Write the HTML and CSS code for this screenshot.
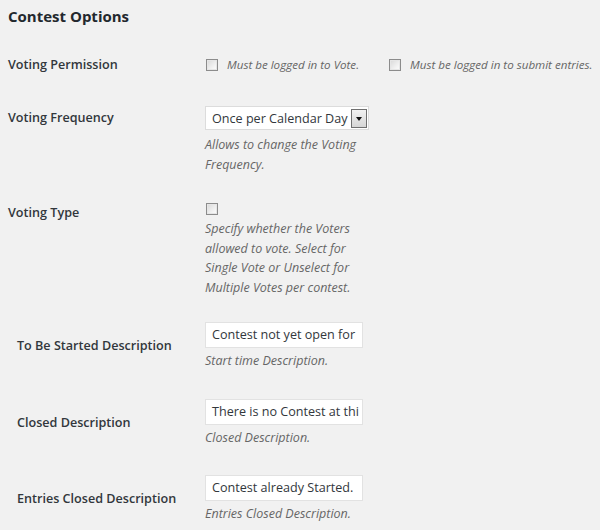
FILE: index.html
```html
<!DOCTYPE html>
<html>
<head>
<meta charset="utf-8">
<link rel="stylesheet" href="styles.css">
</head>
<body>
<div class="page">
  <h3 class="title">Contest Options</h3>

  <div class="row row-perm">
    <div class="label">Voting Permission</div>
    <div class="field inline">
      <label class="check"><span class="cb"></span><span class="desc chk">Must be logged in to Vote.</span></label>
      <label class="check second"><span class="cb"></span><span class="desc chk">Must be logged in to submit entries.</span></label>
    </div>
  </div>

  <div class="row row-freq">
    <div class="label">Voting Frequency</div>
    <div class="field">
      <div class="select"><span class="select-text">Once per Calendar Day</span><span class="select-btn"><span class="tri"></span></span></div>
      <p class="desc block">Allows to change the Voting<br>Frequency.</p>
    </div>
  </div>

  <div class="row row-type">
    <div class="label">Voting Type</div>
    <div class="field">
      <span class="cb solo"></span>
      <p class="desc block type-desc">Specify whether the Voters<br>allowed to vote. Select for<br>Single Vote or Unselect for<br>Multiple Votes per contest.</p>
    </div>
  </div>

  <div class="row row-text first-text">
    <div class="label indent">To Be Started Description</div>
    <div class="field">
      <div class="input">Contest not yet open for</div>
      <p class="desc block small-gap">Start time Description.</p>
    </div>
  </div>

  <div class="row row-text">
    <div class="label indent">Closed Description</div>
    <div class="field">
      <div class="input">There is no Contest at thi</div>
      <p class="desc block small-gap">Closed Description.</p>
    </div>
  </div>

  <div class="row row-text">
    <div class="label indent">Entries Closed Description</div>
    <div class="field">
      <div class="input">Contest already Started.</div>
      <p class="desc block small-gap">Entries Closed Description.</p>
    </div>
  </div>
</div>
</body>
</html>
```

FILE: styles.css
```css
html, body {
  margin: 0;
  padding: 0;
  background: #f1f1f1;
}
body {
  font-family: "Open Sans", "Liberation Sans", sans-serif;
  font-size: 13px;
  color: #23282d;
}
.page {
  padding: 6px 8px 0 8px;
}
.title {
  margin: 0;
  font-size: 15px;
  line-height: 20px;
  font-weight: 700;
  color: #23282d;
}
.row {
  display: flex;
  align-items: flex-start;
}
.label {
  width: 197px;
  flex: none;
  font-weight: 600;
  font-size: 12.6px;
  line-height: 20px;
  color: #32373c;
}
.label.indent {
  padding-left: 9px;
  width: 188px;
}
.field {
  display: flex;
  flex-direction: column;
  align-items: flex-start;
}
.field.inline {
  flex-direction: row;
  align-items: center;
  height: 20px;
}
.desc {
  font-style: italic;
  color: #666;
  font-size: 12.5px;
  line-height: 19.5px;
  white-space: nowrap;
}
.desc.chk {
  font-size: 11.6px;
}
.block {
  margin: 0;
}
.check {
  display: flex;
  align-items: center;
  white-space: nowrap;
}
.check .cb {
  margin: 0 9px 0 1px;
}
.check.second {
  margin-left: 29px;
}
.cb {
  display: inline-block;
  flex: none;
  box-sizing: border-box;
  width: 12px;
  height: 12px;
  border: 1px solid #8c8c8c;
  background: linear-gradient(135deg, #d8d8d8 0%, #f4f4f4 70%, #fdfdfd 100%);
  box-shadow: inset 0 0 0 1px #e6e6e6;
}
.cb.solo {
  margin-left: 1px;
  margin-top: 0;
}
.row-perm {
  margin-top: 29px;
}
.row-freq {
  margin-top: 31px;
}
.row-freq .label {
  margin-top: 2px;
}
.select {
  box-sizing: border-box;
  width: 164px;
  height: 24px;
  background: #fff;
  border: 1px solid #dcdcdc;
  display: flex;
  align-items: center;
  justify-content: space-between;
  padding-left: 6px;
  padding-right: 1px;
}
.select-text {
  font-size: 12.6px;
  color: #32373c;
  white-space: nowrap;
}
.select-btn {
  box-sizing: border-box;
  width: 16px;
  height: 19px;
  border: 1px solid #707070;
  background: linear-gradient(#f2f2f2, #d6d6d6);
  display: flex;
  align-items: center;
  justify-content: center;
}
.tri {
  width: 0;
  height: 0;
  border-left: 3.5px solid transparent;
  border-right: 3.5px solid transparent;
  border-top: 4px solid #111;
  margin-top: 1px;
}
.select + .desc {
  margin-top: 5px;
}
.row-type {
  margin-top: 29px;
}
.type-desc {
  margin-top: 4px;
}
.row-text {
  align-items: center;
  margin-top: 28px;
}
.first-text {
  margin-top: 25px;
}
.input {
  box-sizing: border-box;
  width: 158px;
  height: 26px;
  background: #fff;
  border: 1px solid #e2e2e2;
  padding: 0 6px;
  font-size: 12.6px;
  line-height: 24px;
  color: #32373c;
  white-space: nowrap;
  overflow: hidden;
}
.small-gap {
  margin-top: 3px;
}
```
